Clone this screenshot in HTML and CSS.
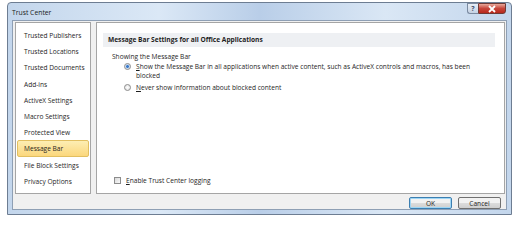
FILE: index.html
```html
<!DOCTYPE html>
<html>
<head>
    <title>Trust Center</title>
    <meta charset="utf-8" />
    <link rel="stylesheet" href="styles.css">
</head>
<body>
    <div class="window">
        <div class="titlebar">
            <span class="title">Trust Center</span>
            <div class="controls">
                <span class="btn-help">?</span>
                <span class="btn-close">
                    <svg width="10" height="8" viewBox="0 0 10 8"><path d="M2 1 L8 7 M8 1 L2 7" stroke="#fff" stroke-width="1.8"/></svg>
                </span>
            </div>
        </div>
        <div class="client">
            <div class="panels">
                <ul class="nav">
                    <li>Trusted Publishers</li>
                    <li>Trusted Locations</li>
                    <li>Trusted Documents</li>
                    <li>Add-ins</li>
                    <li>ActiveX Settings</li>
                    <li>Macro Settings</li>
                    <li>Protected View</li>
                    <li class="active">Message Bar</li>
                    <li>File Block Settings</li>
                    <li>Privacy Options</li>
                </ul>
                <div class="main">
                    <div class="section-head">Message Bar Settings for all Office Applications</div>
                    <div class="group-label">Showing the Message Bar</div>
                    <div class="option">
                        <span class="radio checked"></span>
                        <span class="accel">Show the Message Bar in all applications when active content, such as ActiveX controls and macros, has been blocked</span>
                    </div>
                    <div class="option">
                        <span class="radio"></span>
                        <span class="accel">Never show information about blocked content</span>
                    </div>
                    <div class="spacer"></div>
                    <div class="logging">
                        <span class="checkbox"></span>
                        <span class="accel">Enable Trust Center logging</span>
                    </div>
                </div>
            </div>
            <div class="buttons">
                <button class="btn btn-ok">OK</button>
                <button class="btn">Cancel</button>
            </div>
        </div>
    </div>
</body>
</html>
```

FILE: styles.css
```css
body {
    margin: 0;
    background: #fff;
    font-family: "Open Sans", "DejaVu Sans", sans-serif;
    font-size: 6.6px;
    color: #1e1e1e;
}

.window {
    margin: 2px 0 0 7px;
    width: 505px;
    height: 213px;
    box-sizing: border-box;
    border: 1px solid #6d7d92;
    border-radius: 4px 4px 0 0;
    background: linear-gradient(to right, #c3d6ec, #dbe8f6 30%, #b9cee8 50%, #dae7f5 75%, #c3d6ec);
    padding: 0 4px 4px 4px;
    display: flex;
    flex-direction: column;
}

.titlebar {
    height: 18px;
    display: flex;
    align-items: flex-start;
    justify-content: space-between;
}

.title {
    margin-top: 5px;
    font-size: 6.8px;
    color: #1a1a1a;
}

.controls {
    display: flex;
    margin-right: 1px;
}

.btn-help {
    width: 11px;
    height: 11px;
    box-sizing: border-box;
    border: 1px solid #7a8aa0;
    border-right: none;
    border-radius: 0 0 0 3px;
    background: linear-gradient(#e8eef6, #c4d2e4);
    color: #3d4f6a;
    font-size: 7px;
    font-weight: bold;
    line-height: 10px;
    text-align: center;
}

.btn-close {
    width: 28px;
    height: 11px;
    box-sizing: border-box;
    border: 1px solid #6e3a36;
    border-radius: 0 0 3px 0;
    background: linear-gradient(#e9a99b, #c7453a 50%, #b8281c);
    display: flex;
    align-items: center;
    justify-content: center;
}

.client {
    flex: 1;
    background: #f0f0f0;
    border: 1px solid #8e9fb4;
    padding: 1px 1px 0 2px;
    display: flex;
    flex-direction: column;
}

.panels {
    display: flex;
    gap: 5px;
    height: 172px;
}

.nav {
    list-style: none;
    margin: 0;
    padding: 4px 1px 0 1px;
    width: 76px;
    box-sizing: border-box;
    background: #fff;
    border: 1px solid #a5a5a5;
}

.nav li {
    height: 16.2px;
    line-height: 15px;
    padding-left: 6px;
    border: 1px solid transparent;
    box-sizing: border-box;
    white-space: nowrap;
}

.nav li.active {
    background: linear-gradient(#fdeeb3, #fbd77d);
    border-color: #e2bf60;
    border-radius: 2px;
}

.main {
    flex: 1;
    background: #fff;
    border: 1px solid #a5a5a5;
    padding: 10px 9px 8px 6px;
    display: flex;
    flex-direction: column;
}

.section-head {
    background: #eef0f3;
    font-weight: bold;
    height: 14px;
    line-height: 14px;
    padding-left: 5px;
}

.group-label {
    margin: 5px 0 0 9px;
    line-height: 9px;
}

.option {
    display: flex;
    align-items: flex-start;
    gap: 5px;
    margin: 1px 0 2px 21px;
    line-height: 9px;
    padding-right: 10px;
}

.accel::first-letter {
    text-decoration: underline;
}

.radio {
    flex: none;
    width: 7px;
    height: 7px;
    margin-top: 1px;
    box-sizing: border-box;
    border: 1px solid #8c8c8c;
    border-radius: 50%;
    background: radial-gradient(#fff, #dcdcdc);
}

.radio.checked {
    background: radial-gradient(#3a78c8 30%, #a7c7ea 45%, #e8eef6 70%);
}

.spacer {
    flex: 1;
}

.logging {
    display: flex;
    align-items: center;
    gap: 5px;
    margin-left: 11px;
}

.checkbox {
    width: 7px;
    height: 7px;
    box-sizing: border-box;
    border: 1px solid #8c8c8c;
    background: linear-gradient(135deg, #d8d8d8, #fafafa);
}

.buttons {
    display: flex;
    justify-content: flex-end;
    gap: 6px;
    padding: 3px 4px 0 0;
}

.btn {
    width: 43px;
    height: 12px;
    padding: 0;
    font-family: inherit;
    font-size: 6.6px;
    color: #1e1e1e;
    border: 1px solid #707070;
    border-radius: 2px;
    background: linear-gradient(#f2f2f2 50%, #dcdcdc 50%, #cfcfcf);
}

.btn-ok {
    border-color: #3c7fb1;
    box-shadow: inset 0 0 0 1px #9fd6f5;
}
```
